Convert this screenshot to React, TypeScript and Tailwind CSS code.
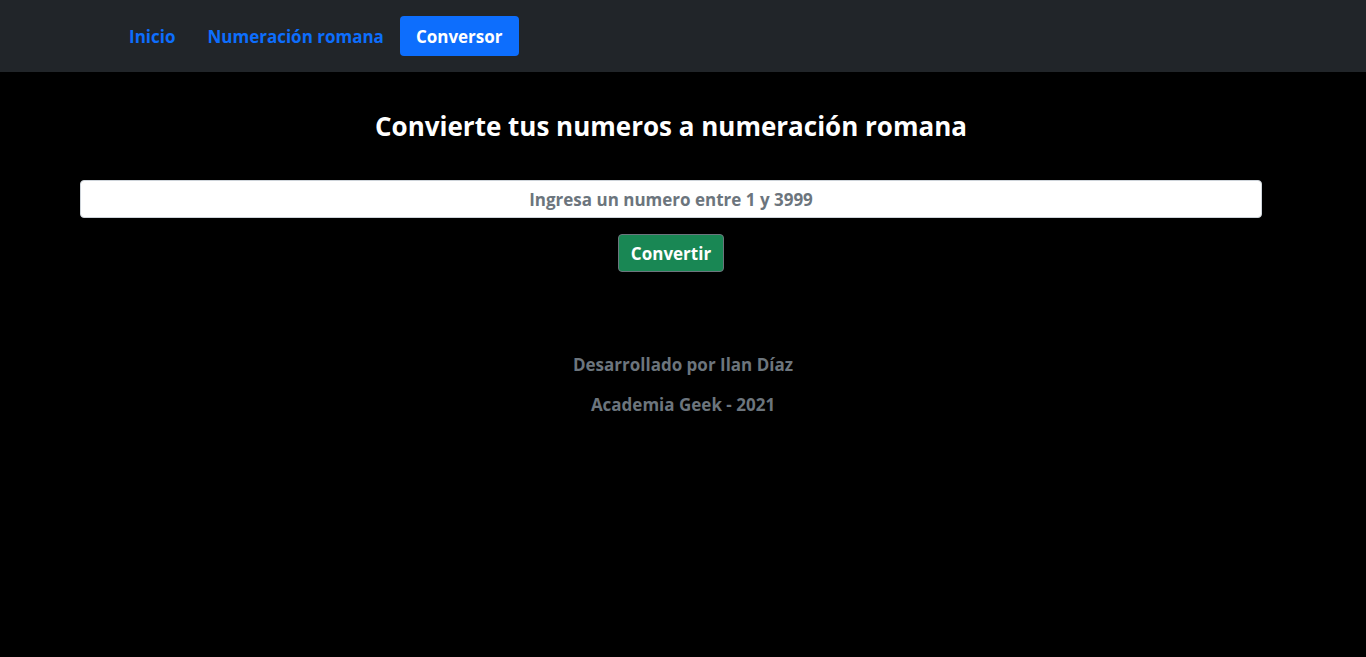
import React from "react";

const navItems = [
  { label: "Inicio", active: false },
  { label: "Numeración romana", active: false },
  { label: "Conversor", active: true },
];

export default function App() {
  return (
    <div className="min-h-screen bg-black font-['Open_Sans',sans-serif] text-[17px] leading-6 font-bold text-white">
      <header className="bg-[#212529] py-4">
        <nav className="mx-auto flex max-w-[1140px] justify-start">
          {navItems.map((item) => (
            <a
              key={item.label}
              href="#"
              aria-current={item.active ? "page" : undefined}
              className={
                item.active
                  ? "rounded bg-[#0d6efd] px-4 pt-[9px] pb-[7px] text-white"
                  : "rounded px-4 pt-[9px] pb-[7px] text-[#0d6efd]"
              }
            >
              {item.label}
            </a>
          ))}
        </nav>
      </header>
      <main className="mr-6 px-20 pt-9">
        <h1 className="text-center text-[26px] leading-9">Convierte tus numeros a numeración romana</h1>
        <form className="mt-9 flex flex-col items-center gap-4">
          <input
            type="text"
            aria-label="Numero"
            placeholder="Ingresa un numero entre 1 y 3999"
            className="h-[38px] w-full rounded border border-[#ced4da] bg-white px-3 text-center text-[#212529] placeholder:text-[#6c757d]"
          />
          <button
            type="button"
            className="rounded border border-[#6c757d] bg-[#198754] px-3 pt-[7px] pb-[5px] text-white"
          >
            Convertir
          </button>
        </form>
      </main>
      <footer className="mt-[81px] flex flex-col items-center gap-4 text-[#6c757d]">
        <p>Desarrollado por Ilan Díaz</p>
        <p>Academia Geek - 2021</p>
      </footer>
    </div>
  );
}
